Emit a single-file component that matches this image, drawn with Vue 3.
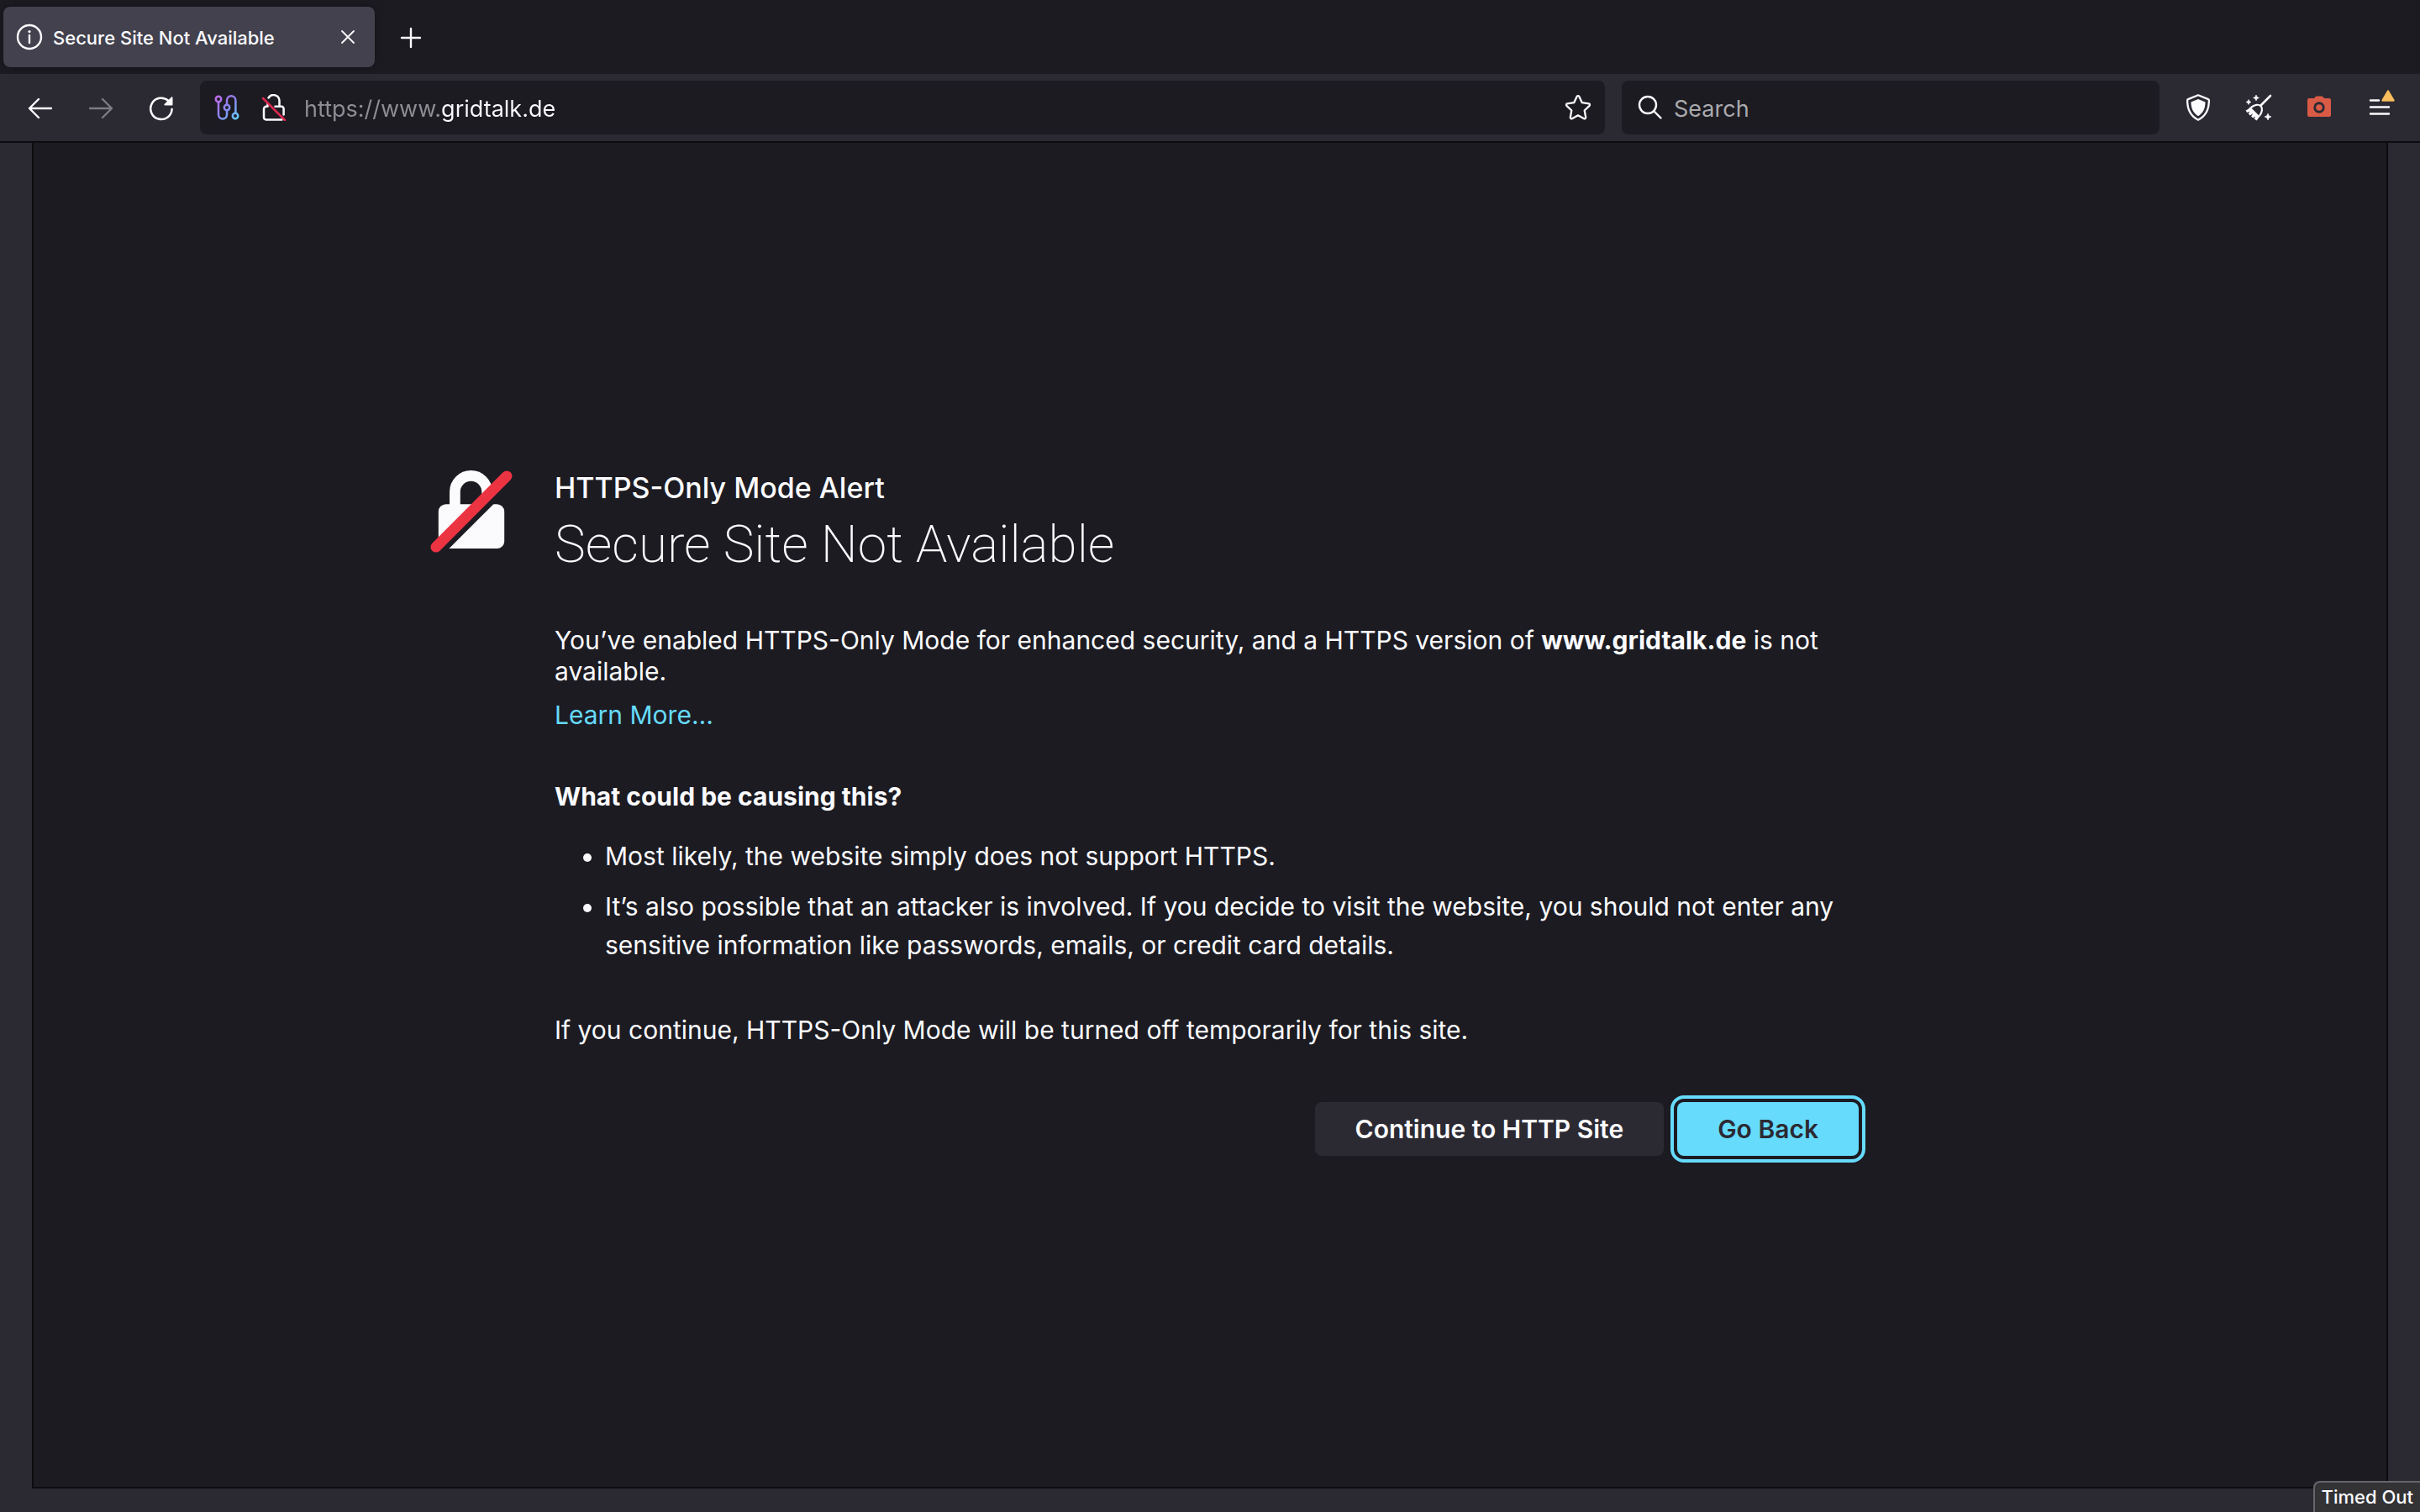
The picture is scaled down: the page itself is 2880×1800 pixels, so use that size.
<script setup>
import { ref } from 'vue'

const url = ref('https://www.gridtalk.de')
const query = ref('')
const host = 'www.gridtalk.de'
const causes = [
  'Most likely, the website simply does not support HTTPS.',
  'It’s also possible that an attacker is involved. If you decide to visit the website, you should not enter any sensitive information like passwords, emails, or credit card details.'
]
</script>

<template>
  <div class="browser">
    <header class="tabs">
      <div class="tab">
        <svg class="icon" viewBox="0 0 32 32" aria-hidden="true">
          <circle cx="16" cy="16" r="14" fill="none" stroke="currentColor" stroke-width="2.4" />
          <path d="M16 14v9" stroke="currentColor" stroke-width="2.4" stroke-linecap="round" />
          <circle cx="16" cy="9.6" r="1.6" fill="currentColor" />
        </svg>
        <span class="tab-title">Secure Site Not Available</span>
        <button class="tool close" aria-label="Close tab">
          <svg class="icon" viewBox="0 0 32 32"><path d="M9 9l14 14M23 9L9 23" fill="none" stroke="currentColor" stroke-width="1.8" stroke-linecap="round" /></svg>
        </button>
      </div>
      <button class="tool" aria-label="New tab">
        <svg class="icon" viewBox="0 0 32 32"><path d="M16 6v22M5 17h22" fill="none" stroke="currentColor" stroke-width="2.4" stroke-linecap="round" /></svg>
      </button>
    </header>

    <nav class="toolbar">
      <div class="nav-buttons">
        <button class="tool" aria-label="Back">
          <svg class="icon" viewBox="0 0 32 32"><path d="M29 17H3M14 6L3 17l11 11" fill="none" stroke="currentColor" stroke-width="2.4" stroke-linecap="round" stroke-linejoin="round" /></svg>
        </button>
        <button class="tool" aria-label="Forward" disabled>
          <svg class="icon" viewBox="0 0 32 32"><path d="M3 17h26M18 6l11 11-11 11" fill="none" stroke="currentColor" stroke-width="2.4" stroke-linecap="round" stroke-linejoin="round" /></svg>
        </button>
        <button class="tool" aria-label="Reload">
          <svg class="icon" viewBox="0 0 32 32">
            <path d="M28.6 18A12.7 12.7 0 1 1 24.5 8" fill="none" stroke="currentColor" stroke-width="2.5" stroke-linecap="round" />
            <path d="M29.5 4.2v8.3a1 1 0 0 1-1 1h-8.3c-.8 0-1.1-.8-.6-1.4l8.4-8.5c.6-.5 1.5-.2 1.5.6z" fill="currentColor" />
          </svg>
        </button>
      </div>

      <div class="field address">
        <button class="tool" aria-label="Tor circuit">
          <svg class="icon" viewBox="0 0 32 32">
            <defs>
              <linearGradient id="circuit" gradientUnits="userSpaceOnUse" x1="3" y1="3" x2="29" y2="29">
                <stop offset="0" stop-color="#c069e8" />
                <stop offset=".5" stop-color="#8b84f2" />
                <stop offset="1" stop-color="#62cdf5" />
              </linearGradient>
            </defs>
            <g fill="none" stroke="url(#circuit)" stroke-width="2.5">
              <circle cx="6" cy="6" r="3.2" />
              <circle cx="16" cy="16" r="3.2" />
              <circle cx="26" cy="26" r="3.2" />
              <path d="M6 9.2V24.5a5 5 0 0 0 10 0V19.2M16 12.8V7.5a5.2 5.2 0 0 1 10.4 0V22.8" />
            </g>
          </svg>
        </button>
        <button class="tool" aria-label="Connection is not secure">
          <svg class="icon" viewBox="0 0 32 32">
            <path d="M9.5 4.5A7 7 0 0 1 22.5 8v6.5" fill="none" stroke="currentColor" stroke-width="2.5" stroke-linecap="round" />
            <path d="M8.5 14.8H7A3 3 0 0 0 4 17.8v10A2.5 2.5 0 0 0 6.5 30.4h19M17.5 14.8h7.5a2.6 2.6 0 0 1 2.6 2.6v7M8.5 11.5v3" fill="none" stroke="currentColor" stroke-width="2.5" stroke-linecap="round" />
            <path d="M3 5l26 26" stroke="#e22850" stroke-width="2.5" stroke-linecap="round" />
          </svg>
        </button>
        <input v-model="url" class="text url" type="text" aria-label="Address" />
        <button class="tool" aria-label="Bookmark this page">
          <svg class="icon" viewBox="0 0 32 32">
            <path d="M14.7 2.8a1.5 1.5 0 0 1 2.6 0l3.5 7.4 8 1.1a1.5 1.5 0 0 1 .8 2.5l-5.9 5.7 1.5 8.2a1.5 1.5 0 0 1-2.1 1.5L16 25.3l-7.1 3.9a1.5 1.5 0 0 1-2.1-1.5l1.5-8.2-5.9-5.7a1.5 1.5 0 0 1 .8-2.5l8-1.1z" fill="none" stroke="currentColor" stroke-width="2.3" stroke-linejoin="round" />
          </svg>
        </button>
      </div>

      <div class="field search">
        <svg class="icon" viewBox="0 0 32 32" aria-hidden="true">
          <circle cx="13" cy="13" r="10" fill="none" stroke="currentColor" stroke-width="2.4" />
          <path d="M20.5 20.5l8 8" stroke="currentColor" stroke-width="2.4" stroke-linecap="round" />
        </svg>
        <input v-model="query" class="text" type="text" placeholder="Search" aria-label="Search" />
      </div>

      <div class="actions">
        <button class="tool" aria-label="Security level">
          <svg class="icon" viewBox="0 0 32 32">
            <path d="M16 1.3l12 4.8c.5.2.9.7.9 1.2C29 19 24.5 26.5 16 30.7 7.5 26.5 3 19 3.1 7.3c0-.5.4-1 .9-1.2z" fill="none" stroke="currentColor" stroke-width="2.3" stroke-linejoin="round" />
            <path d="M16 6l8.5 3.5C24.5 17 22 22.5 16 26.2 10 22.5 7.5 17 7.5 9.5z" fill="currentColor" />
          </svg>
        </button>
        <button class="tool" aria-label="New identity">
          <svg class="icon" viewBox="0 0 32 32">
            <path d="M30 2L18.5 13.5" fill="none" stroke="currentColor" stroke-width="2.6" stroke-linecap="round" />
            <path d="M7.5 15.5c4-3 8.500-3.500 11-1.200 2.400 2.400 1.800 7-1.200 11" fill="none" stroke="currentColor" stroke-width="2.2" stroke-linecap="round" />
            <path d="M6 15.2l11.3 11.2-3.6 5.2-3-2.1 1.4-3-2.8 2-2.2-2 2.200-3.500-3.500 2.400-2-2 1.700-2.600-3.200 1.300L.5 19.600C2.800 18.600 4.600 17 6 15.200z" fill="currentColor" />
            <path d="M13 1l1.1 2.4L16.500 4.500l-2.400 1.100L13 8l-1.100-2.400L9.500 4.500l2.400-1.100zM4 6.500l.9 2.100L7 9.500l-2.100.9L4 12.500l-.9-2.100L1 9.500l2.100-.9zM27 23l1.200 2.800L31 27l-2.800 1.200L27 31l-1.200-2.800L23 27l2.800-1.200z" fill="currentColor" stroke="currentColor" stroke-width=".6" />
          </svg>
        </button>
        <button class="tool camera" aria-label="Take screenshot">
          <svg class="icon" viewBox="0 0 32 32">
            <path fill-rule="evenodd" d="M4 5h6l1.500-1.700c.4-.5.8-.8 1.500-.8h6c.7 0 1.100.3 1.500.8L22 5h6a2 2 0 0 1 2 2v18a2 2 0 0 1-2 2H4a2 2 0 0 1-2-2V7a2 2 0 0 1 2-2zM16 9.300a6.700 6.700 0 1 0 0 13.400A6.700 6.700 0 0 0 16 9.300zm0 2.900a3.800 3.800 0 1 1 0 7.600 3.800 3.800 0 0 1 0-7.600z" fill="currentColor" />
          </svg>
        </button>
        <button class="tool menu" aria-label="Open application menu">
          <svg class="icon" viewBox="0 0 32 32"><path d="M5 7.500h10M5 15.500h22M5 23.500h22" fill="none" stroke="currentColor" stroke-width="2.4" stroke-linecap="round" /></svg>
          <svg class="badge" viewBox="0 0 16 14" aria-hidden="true"><path d="M8 1.500l6.500 11h-13z" fill="#f9bd5c" stroke="#f9bd5c" stroke-width="2.4" stroke-linejoin="round" /></svg>
        </button>
      </div>
    </nav>

    <main class="viewport">
      <div class="page">
        <svg class="lock" viewBox="0 0 100 100" aria-hidden="true">
          <path d="M30 46V26a19.500 19.500 0 0 1 39 0v20" fill="none" stroke="#fbfbfe" stroke-width="13" />
          <rect x="10" y="41" width="80" height="54" rx="9" fill="#fbfbfe" />
          <path d="M8 102L102 8" stroke="#1c1b22" stroke-width="11" />
          <path d="M7 93L93 7" stroke="#eb3342" stroke-width="13" stroke-linecap="round" />
        </svg>
        <div class="message">
          <p class="kicker">HTTPS-Only Mode Alert</p>
          <h1>Secure Site Not Available</h1>
          <p class="lead">You’ve enabled HTTPS-Only Mode for enhanced security, and a HTTPS version of <strong>{{ host }}</strong> is not available.</p>
          <a class="more" href="#">Learn More…</a>
          <h2>What could be causing this?</h2>
          <ul>
            <li v-for="cause in causes" :key="cause">{{ cause }}</li>
          </ul>
          <p class="note">If you continue, HTTPS-Only Mode will be turned off temporarily for this site.</p>
          <div class="buttons">
            <button class="action">Continue to HTTP Site</button>
            <button class="action primary">Go Back</button>
          </div>
        </div>
      </div>
    </main>

    <div class="status" role="status">Timed Out</div>
  </div>
</template>

<style>
body {
  margin: 0;
  background: #2b2a33;
}
</style>

<style scoped>
.browser {
  display: flex;
  flex-direction: column;
  min-height: 100vh;
  color: #fbfbfe;
  font-family: Inter, "Liberation Sans", sans-serif;
  font-size: 30px;
}

button,
input {
  margin: 0;
  padding: 0;
  border: 0;
  background: none;
  color: inherit;
  font: inherit;
}

.icon {
  display: block;
  flex: none;
  width: 32px;
  height: 32px;
}

.tool {
  flex: none;
}

.tool:disabled {
  color: #7c7b82;
}

.tabs {
  display: flex;
  align-items: center;
  gap: 27px;
  height: 72px;
  padding: 8px 4px;
  background: #1c1b22;
}

.tab {
  box-sizing: border-box;
  display: flex;
  align-items: center;
  gap: 12px;
  width: 442px;
  height: 72px;
  padding: 0 16px 0 15px;
  border-radius: 8px;
  background: #42414d;
  box-shadow: 0 0 8px rgba(0, 0, 0, 0.4);
}

.tab-title {
  flex: 1;
  padding-top: 2px;
  font-size: 22px;
  font-weight: 500;
  line-height: 32px;
  white-space: nowrap;
}

.toolbar {
  display: flex;
  align-items: center;
  height: 64px;
  padding: 8px 32px;
  border-bottom: 2px solid #0c0c0f;
  background: #2b2a33;
}

.nav-buttons {
  display: flex;
  gap: 40px;
  margin-right: 30px;
}

.field {
  box-sizing: border-box;
  display: flex;
  align-items: center;
  height: 64px;
  border-radius: 8px;
  background: #1c1b22;
}

.address {
  flex: 1;
  gap: 24px;
  margin-right: 20px;
  padding: 0 16px;
}

.search {
  flex: 0 1 640px;
  gap: 12px;
  margin-right: 30px;
  padding: 0 18px;
}

.text {
  flex: 1;
  min-width: 0;
  height: 40px;
  padding-top: 2px;
  font-size: 27px;
  outline: none;
}

.text::placeholder {
  color: #aaaaae;
  opacity: 1;
}

.url {
  margin-left: -4px;
  background: linear-gradient(to right, #8f8e94 162px, #fbfbfe 162px);
  background-clip: text;
  -webkit-text-fill-color: transparent;
}

.actions {
  display: flex;
  gap: 40px;
}

.camera {
  color: #d95a45;
}

.menu {
  position: relative;
}

.badge {
  position: absolute;
  top: -5px;
  right: -2px;
  width: 16px;
  height: 14px;
}

.viewport {
  display: flex;
  flex: 1;
  align-items: center;
  margin: 0 38px 28px;
  border: 2px solid #0c0c0f;
  border-top: 0;
  background: #1c1b22;
}

.page {
  display: grid;
  flex: 1;
  grid-template-columns: 148px minmax(0, 1560px) 148px;
  justify-content: center;
  align-items: start;
  padding-top: 4px;
}

.lock {
  width: 98px;
  height: 98px;
}

.message {
  line-height: 37px;
}

.kicker {
  margin: 0;
  font-size: 34px;
  font-weight: 500;
  line-height: 42px;
}

h1 {
  margin: 6px 0 56px;
  font-family: Roboto, Inter, sans-serif;
  font-size: 62px;
  font-weight: 200;
  line-height: 80px;
}

.lead,
.note {
  margin: 0;
}

.more {
  display: block;
  width: max-content;
  margin-top: 15px;
  color: #66dbfb;
  text-decoration: none;
}

h2 {
  margin: 60px 0 29px;
  font-size: 30px;
  font-weight: 700;
  line-height: 37px;
}

ul {
  margin: 0;
  padding-left: 60px;
}

li {
  margin-bottom: 14px;
  line-height: 46px;
}

.note {
  margin-top: 60px;
}

.buttons {
  display: flex;
  justify-content: flex-end;
  gap: 16px;
  margin-top: 59px;
  padding: 8px;
}

.action {
  height: 64px;
  padding: 0 48px;
  border-radius: 8px;
  background: #2b2a33;
  font-weight: 600;
}

.primary {
  background: #66dbfb;
  color: #2b2a33;
  outline: 4px solid #66dbfb;
  outline-offset: 4px;
}

.status {
  position: fixed;
  right: 0;
  bottom: 0;
  padding: 2px 8px;
  border: 2px solid #66656b;
  border-width: 2px 0 0 2px;
  border-radius: 8px 0 0 0;
  background: #333336;
  font-size: 22px;
  font-weight: 500;
  line-height: 31px;
}
</style>
